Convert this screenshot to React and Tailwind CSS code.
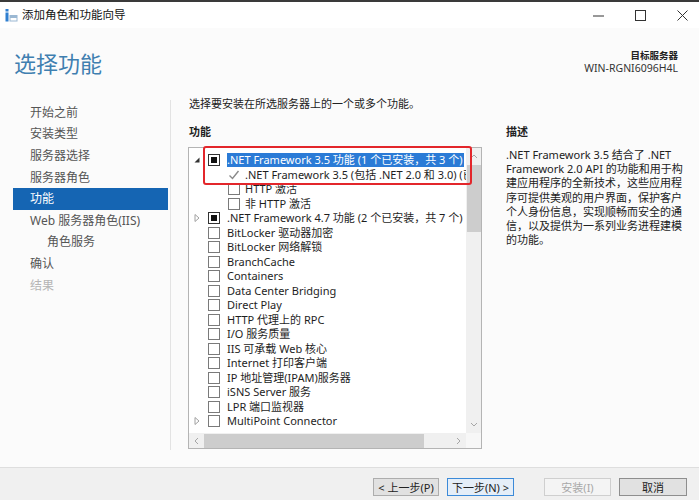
import React from "react";

const FONT = "font-['Noto_Sans','Noto_Sans_CJK_SC',sans-serif]";

function Checkbox({ state }) {
  if (state === "partial") {
    return (
      <div className="w-[12px] h-[12px] border border-[#333333] bg-white flex items-center justify-center shrink-0">
        <div className="w-[6px] h-[6px] bg-[#111111]" />
      </div>
    );
  }
  if (state === "installed") {
    return (
      <div className="w-[12px] h-[12px] flex items-center justify-center shrink-0">
        <svg width="12" height="12" viewBox="0 0 12 12">
          <polyline points="1.5,6.5 4.5,9.5 10.5,2" fill="none" stroke="#8a8a8a" strokeWidth="1.4" />
        </svg>
      </div>
    );
  }
  return <div className="w-[12px] h-[12px] border border-[#7a7a7a] bg-white shrink-0" />;
}

function Toggle({ kind }) {
  if (kind === "open") {
    return (
      <svg width="6" height="6" viewBox="0 0 6 6">
        <polygon points="5.5,0.5 5.5,5.5 0.5,5.5" fill="#333333" />
      </svg>
    );
  }
  if (kind === "closed") {
    return (
      <svg width="6" height="8" viewBox="0 0 6 8">
        <polygon points="1,0.5 5,4 1,7.5" fill="none" stroke="#a0a0a0" strokeWidth="1" />
      </svg>
    );
  }
  return null;
}

function FeatureRow({ label, toggle, state, child, selected }) {
  return (
    <div className="h-[14.5px] flex items-center whitespace-nowrap">
      <div className="w-[16px] flex items-center justify-center shrink-0">
        <Toggle kind={toggle} />
      </div>
      {child ? (
        <>
          <div className="w-[23px] shrink-0" />
          <Checkbox state={state} />
          <span className="ml-[5px] text-[11px] text-[#1e1e1e] leading-[14px]">{label}</span>
        </>
      ) : (
        <>
          <div className="w-[3px] shrink-0" />
          <Checkbox state={state} />
          <span
            className={
              selected
                ? "ml-[7px] text-[11px] leading-[14px] bg-[#2b7bd6] text-white pr-[2px]"
                : "ml-[7px] text-[11px] leading-[14px] text-[#1e1e1e]"
            }
          >
            {label}
          </span>
        </>
      )}
    </div>
  );
}

const features = [
  { label: ".NET Framework 3.5 功能 (1 个已安装，共 3 个)", toggle: "open", state: "partial", selected: true },
  { label: ".NET Framework 3.5 (包括 .NET 2.0 和 3.0) (已安装)", state: "installed", child: true },
  { label: "HTTP 激活", state: "empty", child: true },
  { label: "非 HTTP 激活", state: "empty", child: true },
  { label: ".NET Framework 4.7 功能 (2 个已安装，共 7 个)", toggle: "closed", state: "partial" },
  { label: "BitLocker 驱动器加密", state: "empty" },
  { label: "BitLocker 网络解锁", state: "empty" },
  { label: "BranchCache", state: "empty" },
  { label: "Containers", state: "empty" },
  { label: "Data Center Bridging", state: "empty" },
  { label: "Direct Play", state: "empty" },
  { label: "HTTP 代理上的 RPC", state: "empty" },
  { label: "I/O 服务质量", state: "empty" },
  { label: "IIS 可承载 Web 核心", state: "empty" },
  { label: "Internet 打印客户端", state: "empty" },
  { label: "IP 地址管理(IPAM)服务器", state: "empty" },
  { label: "iSNS Server 服务", state: "empty" },
  { label: "LPR 端口监视器", state: "empty" },
  { label: "MultiPoint Connector", toggle: "closed", state: "empty" },
];

const steps = [
  { label: "开始之前" },
  { label: "安装类型" },
  { label: "服务器选择" },
  { label: "服务器角色" },
  { label: "功能", active: true },
  { label: "Web 服务器角色(IIS)" },
  { label: "角色服务", indent: true },
  { label: "确认" },
  { label: "结果", disabled: true },
];

const description = [
  ".NET Framework 3.5 结合了 .NET",
  "Framework 2.0 API 的功能和用于构",
  "建应用程序的全新技术，这些应用程",
  "序可提供美观的用户界面，保护客户",
  "个人身份信息，实现顺畅而安全的通",
  "信，以及提供为一系列业务进程建模",
  "的功能。",
];

function WizardIcon() {
  return (
    <svg width="13" height="13" viewBox="0 0 13 13">
      <rect x="0.5" y="0" width="3" height="2.5" fill="#2f7fd0" />
      <rect x="0.5" y="3.5" width="3" height="9" fill="#2f7fd0" />
      <rect x="4.5" y="6" width="8" height="6.5" fill="#9bb8d3" />
      <rect x="5.5" y="9" width="6" height="2.5" fill="#ffffff" />
    </svg>
  );
}

function Chevron({ dir }) {
  const pts = {
    up: "1,5 4,2 7,5",
    down: "1,2 4,5 7,2",
    left: "5,1 2,4 5,7",
    right: "3,1 6,4 3,7",
  }[dir];
  return (
    <svg width="8" height="8" viewBox="0 0 8 8">
      <polyline points={pts} fill="none" stroke="#a6a6a6" strokeWidth="1" />
    </svg>
  );
}

export default function App() {
  return (
    <div className={`w-[699px] h-[500px] overflow-hidden flex flex-col bg-[#fbfbfb] ${FONT}`}>
      {/* window edge */}
      <div className="h-[2px] bg-[#3a3a3a] shrink-0" />

      {/* title bar */}
      <div className="h-[26px] bg-white flex items-center shrink-0">
        <div className="ml-[5px] flex items-center">
          <WizardIcon />
        </div>
        <span className="ml-[4px] text-[11.5px] text-[#111111]">添加角色和功能向导</span>
        <div className="ml-auto flex items-center mr-[11px] gap-[31px]">
          <svg width="11" height="11" viewBox="0 0 11 11">
            <line x1="0" y1="6" x2="11" y2="6" stroke="#333" strokeWidth="1" />
          </svg>
          <svg width="11" height="11" viewBox="0 0 11 11">
            <rect x="0.5" y="0.5" width="10" height="10" fill="none" stroke="#333" strokeWidth="1" />
          </svg>
          <svg width="11" height="11" viewBox="0 0 11 11">
            <line x1="0.5" y1="0.5" x2="10.5" y2="10.5" stroke="#333" strokeWidth="1" />
            <line x1="10.5" y1="0.5" x2="0.5" y2="10.5" stroke="#333" strokeWidth="1" />
          </svg>
        </div>
      </div>

      {/* header */}
      <div className="h-[64px] flex justify-between shrink-0">
        <h1 className="ml-[14px] mt-[20px] text-[22px] leading-[30px] text-[#3f7fb0] font-normal">选择功能</h1>
        <div className="mr-[21px] mt-[22px] flex flex-col items-end">
          <span className="text-[9.5px] leading-[12px] font-bold text-[#222]">目标服务器</span>
          <span className="text-[10.5px] leading-[13px] text-[#333]">WIN-RGNI6096H4L</span>
        </div>
      </div>

      {/* main */}
      <div className="flex-1 flex">
        <nav className="w-[171px] shrink-0 mt-[8px] mb-[17px] border-r border-[#e3e3e3] pl-[13px] pr-[2px] pt-[2px]">
          {steps.map((s) => (
            <div
              key={s.label}
              className={
                s.active
                  ? "h-[21.6px] flex items-center bg-[#1565b3] text-white text-[12px] pl-[17px]"
                  : s.disabled
                  ? "h-[21.6px] flex items-center text-[#b5b5b5] text-[12px] pl-[17px]"
                  : s.indent
                  ? "h-[21.6px] flex items-center text-[#555555] text-[12px] pl-[34px]"
                  : "h-[21.6px] flex items-center text-[#555555] text-[12px] pl-[17px]"
              }
            >
              {s.label}
            </div>
          ))}
        </nav>

        <div className="flex-1 pl-[17px] pt-[4px] flex flex-col">
          <p className="pl-[1px] text-[11px] leading-[16px] text-[#222]">选择要安装在所选服务器上的一个或多个功能。</p>
          <div className="flex mt-[12px]">
            <div className="w-[294px] shrink-0 flex flex-col">
              <div className="pl-[1px] text-[11px] leading-[16px] font-bold text-[#222]">功能</div>
              <div className="relative mt-[7px] h-[302px] border border-[#b4b4b4] bg-white flex flex-col">
                <div className="flex-1 flex min-h-0">
                  <div className="flex-1 pt-[5px] overflow-hidden">
                    {features.map((f) => (
                      <FeatureRow key={f.label} {...f} />
                    ))}
                  </div>
                  <div className="w-[15px] bg-[#f0f0f0] flex flex-col items-center shrink-0">
                    <div className="h-[17px] flex items-center justify-center">
                      <Chevron dir="up" />
                    </div>
                    <div className="w-[14px] h-[67px] bg-[#cdcdcd]" />
                    <div className="flex-1" />
                    <div className="h-[17px] flex items-center justify-center">
                      <Chevron dir="down" />
                    </div>
                  </div>
                </div>
                <div className="h-[15px] flex shrink-0">
                  <div className="flex-1 bg-[#f0f0f0] flex items-center">
                    <div className="w-[15px] flex items-center justify-center">
                      <Chevron dir="left" />
                    </div>
                    <div className="w-[220px] h-[14px] bg-[#cdcdcd]" />
                    <div className="flex-1" />
                    <div className="w-[17px] flex items-center justify-center">
                      <Chevron dir="right" />
                    </div>
                  </div>
                  <div className="w-[15px] bg-[#f7f7f7]" />
                </div>
                {/* highlight frame around the .NET 3.5 group */}
                <div className="absolute left-[14px] top-[-2px] w-[269px] h-[39px] border-[2.5px] border-[#e3262b] rounded-[3px] pointer-events-none" />
              </div>
            </div>

            <div className="ml-[24px] flex flex-col">
              <div className="text-[11px] leading-[16px] font-bold text-[#222]">描述</div>
              <div className="mt-[8px] text-[11px] leading-[14.2px] text-[#222] whitespace-nowrap">
                {description.map((line) => (
                  <div key={line}>{line}</div>
                ))}
              </div>
            </div>
          </div>
        </div>
      </div>

      {/* footer */}
      <div className="h-[33px] shrink-0 border-t border-[#dedede] bg-[#f0f0f0] flex items-start justify-end pr-[12px] pt-[10px] text-[11px]">
        <button className="w-[66px] h-[18px] border border-[#adadad] bg-[#e1e1e1] text-[#222] flex items-center justify-center leading-none">
          &lt; 上一步(P)
        </button>
        <button className="ml-[8px] w-[67px] h-[18px] border border-[#3c8ad8] bg-[#e5eef8] text-[#222] flex items-center justify-center leading-none">
          下一步(N) &gt;
        </button>
        <button className="ml-[30px] w-[67px] h-[18px] border border-[#cfcfcf] bg-[#f4f4f4] text-[#a8a8a8] flex items-center justify-center leading-none">
          安装(I)
        </button>
        <button className="ml-[8px] w-[68px] h-[18px] border border-[#8e8e8e] bg-[#e1e1e1] text-[#222] flex items-center justify-center leading-none">
          取消
        </button>
      </div>
    </div>
  );
}
